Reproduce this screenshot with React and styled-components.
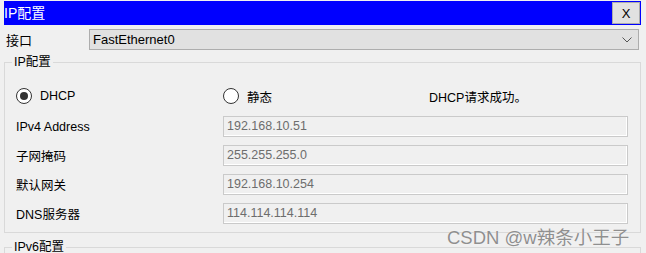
import React from "react";
import styled, { createGlobalStyle } from "styled-components";

const GlobalStyle = createGlobalStyle`
  html, body {
    margin: 0;
    padding: 0;
    background: #f0f0f0;
  }
  body {
    font-family: "Liberation Sans", "Noto Sans CJK SC", sans-serif;
    color: #000;
  }
`;

const Window = styled.div`
  position: relative;
  width: 646px;
  height: 253px;
  overflow: hidden;
  background: #f0f0f0;
`;

const TitleBar = styled.div`
  margin: 1px 5px 0 4px;
  height: 24px;
  background: #0000ff;
  display: flex;
  align-items: center;
  justify-content: space-between;
  padding-right: 1px;
`;

const Title = styled.span`
  color: #fff;
  font-size: 14px;
  line-height: 24px;
`;

const CloseButton = styled.div`
  width: 28px;
  height: 22px;
  box-sizing: border-box;
  border: 1px solid #adadad;
  background: #e1e1e1;
  font-size: 13px;
  display: flex;
  align-items: center;
  justify-content: center;
`;

const InterfaceRow = styled.div`
  margin: 4px 7px 0 6px;
  display: grid;
  grid-template-columns: 83px 1fr;
  align-items: center;
`;

const RowLabel = styled.span`
  font-size: 13px;
`;

const Select = styled.div`
  height: 21px;
  box-sizing: border-box;
  border: 1px solid #adadad;
  background: #e1e1e1;
  padding: 0 6px 0 3px;
  font-size: 13px;
  display: flex;
  align-items: center;
  justify-content: space-between;
`;

const Group = styled.fieldset`
  margin: ${(p) => (p.$first ? "4px" : "6px")} 5px 0 4px;
  padding: 0;
  border: 1px solid #d9d9d9;
  min-width: 0;
  height: ${(p) => (p.$height ? `${p.$height}px` : "auto")};
`;

const Legend = styled.legend`
  margin-left: 7px;
  padding: 0 2px;
  font-size: 12.5px;
  line-height: 16px;
`;

const GroupBody = styled.div`
  padding: 16px 12px 8px 11px;
  font-size: 12.5px;
`;

const ModeRow = styled.div`
  display: grid;
  grid-template-columns: 207px 206px 1fr;
  align-items: center;
  height: 20px;
`;

const RadioOption = styled.label`
  display: flex;
  align-items: center;
  gap: 8px;
`;

const RadioCircle = styled.span`
  width: 16px;
  height: 16px;
  box-sizing: border-box;
  border: 1px solid #333;
  border-radius: 50%;
  background: #fff;
  display: flex;
  align-items: center;
  justify-content: center;
  &::after {
    content: "";
    display: ${(p) => (p.$checked ? "block" : "none")};
    width: 8px;
    height: 8px;
    border-radius: 50%;
    background: #333;
  }
`;

const Fields = styled.div`
  margin-top: 10px;
  display: grid;
  grid-template-columns: 207px 1fr;
  row-gap: 8px;
  align-items: center;
`;

const Field = styled.div`
  height: 21px;
  box-sizing: border-box;
  border: 1px solid #cacaca;
  box-shadow: inset -1px -1px 0 #fff;
  padding-left: 3px;
  line-height: 19px;
  font-size: 12.5px;
  color: #6d6d6d;
`;

const Watermark = styled.div`
  position: absolute;
  left: 447px;
  top: 223px;
  font-size: 18.5px;
  color: #8f8f8f;
  text-shadow: 0 0 1px #fff;
  white-space: nowrap;
`;

const Chevron = () => (
  <svg width="10" height="6" viewBox="0 0 10 6">
    <polyline points="0.5,0.5 5,5 9.5,0.5" fill="none" stroke="#555" strokeWidth="1" />
  </svg>
);

const rows = [
  ["IPv4 Address", "192.168.10.51"],
  ["子网掩码", "255.255.255.0"],
  ["默认网关", "192.168.10.254"],
  ["DNS服务器", "114.114.114.114"],
];

const App = () => (
  <Window>
    <GlobalStyle />
    <TitleBar>
      <Title>IP配置</Title>
      <CloseButton>X</CloseButton>
    </TitleBar>
    <InterfaceRow>
      <RowLabel>接口</RowLabel>
      <Select>
        <span>FastEthernet0</span>
        <Chevron />
      </Select>
    </InterfaceRow>
    <Group $first>
      <Legend>IP配置</Legend>
      <GroupBody>
        <ModeRow>
          <RadioOption>
            <RadioCircle $checked />
            DHCP
          </RadioOption>
          <RadioOption>
            <RadioCircle />
            静态
          </RadioOption>
          <span>DHCP请求成功。</span>
        </ModeRow>
        <Fields>
          {rows.map(([label, value]) => (
            <React.Fragment key={label}>
              <span>{label}</span>
              <Field>{value}</Field>
            </React.Fragment>
          ))}
        </Fields>
      </GroupBody>
    </Group>
    <Group $height={60}>
      <Legend>IPv6配置</Legend>
    </Group>
    <Watermark>CSDN @w辣条小王子</Watermark>
  </Window>
);

export default App;
